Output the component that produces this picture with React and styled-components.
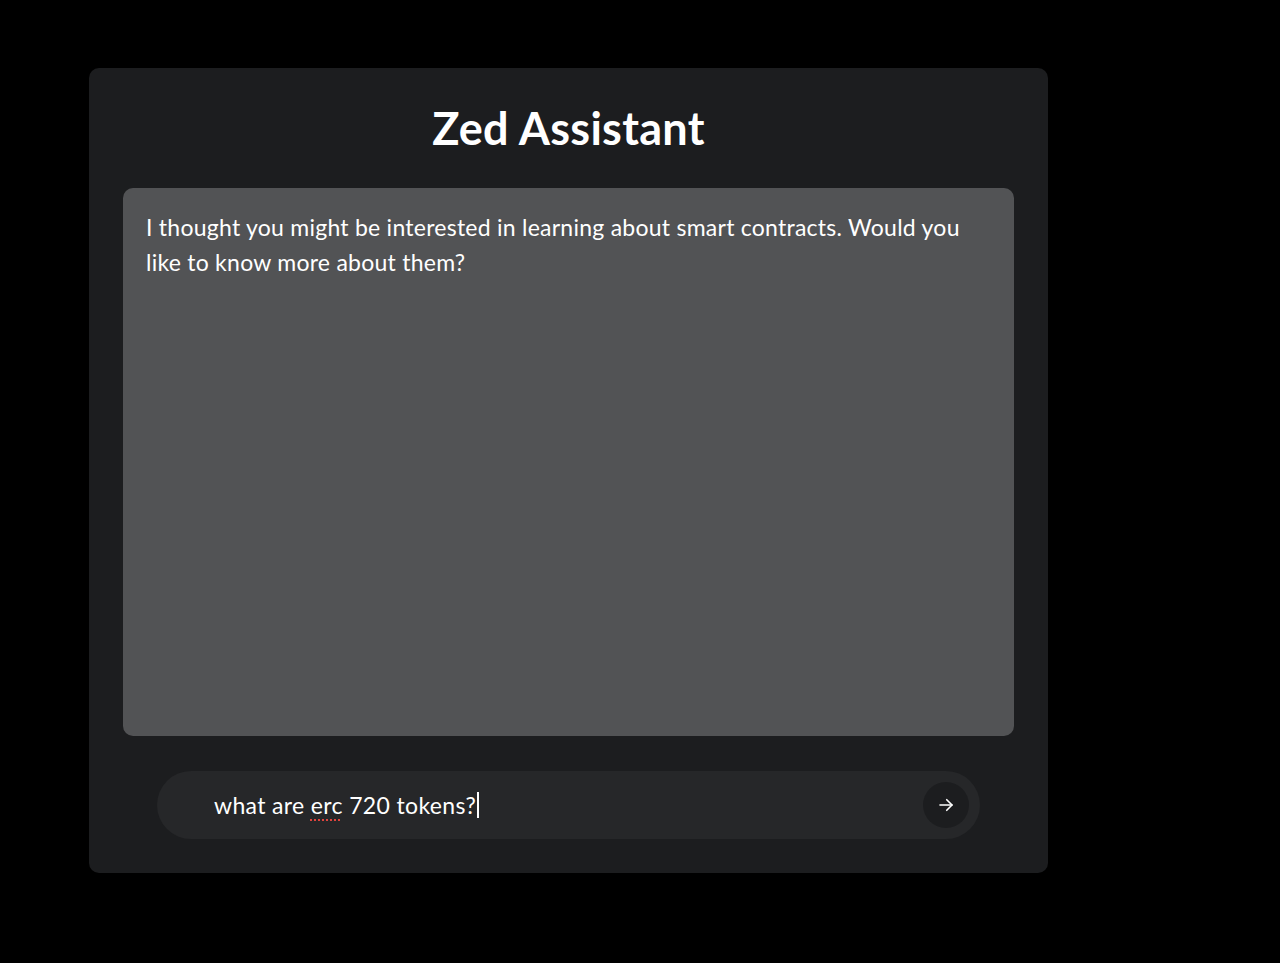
import React from 'react';
import styled, { createGlobalStyle } from 'styled-components';

/*                                   UI ELEMENTS                              */

const Global = createGlobalStyle`
  html, body {
    margin: 0;
    padding: 0;
    background: #000000;
  }
  body {
    font-family: "Lato", "Open Sans", sans-serif;
  }
`

// PAGE
const Page = styled.div`
  width: 1280px;
  height: 963px;
  padding: 68px 0 0 89px;
  box-sizing: border-box;
  background: #000000;
`

// PANEL
const Panel = styled.div`
  width: 959px;
  height: 805px;
  box-sizing: border-box;
  background: #1c1d1f;
  border-radius: 10px;
  padding: 0 34px 34px 34px;
  display: flex;
  flex-direction: column;
`

// TITLE
const Title = styled.h1`
  margin: 0;
  height: 120px;
  display: flex;
  align-items: center;
  justify-content: center;
  font-size: 45px;
  font-weight: 700;
  color: #ffffff;
  letter-spacing: 0.3px;
`

// CHAT LOG
const Log = styled.div`
  height: 548px;
  background: #525355;
  border-radius: 10px;
  padding: 22px 23px;
  box-sizing: border-box;
`

const Message = styled.p`
  margin: 0;
  font-size: 23px;
  line-height: 35px;
  color: #ffffff;
  letter-spacing: 0.25px;
`

// INPUT ROW
const InputBar = styled.div`
  margin: 35px 34px 0 34px;
  height: 68px;
  border-radius: 34px;
  background: #262729;
  display: flex;
  align-items: center;
  padding: 0 11px 0 57px;
`

const Field = styled.div`
  flex: 1;
  font-size: 23px;
  letter-spacing: 0.35px;
  color: #ffffff;
  display: flex;
  align-items: center;
`

const Misspelled = styled.span`
  text-decoration: underline dotted #e0443e;
  text-decoration-thickness: 2px;
  text-underline-offset: 5px;
`

const Caret = styled.span`
  display: inline-block;
  width: 1.5px;
  height: 26px;
  background: #ffffff;
  margin-left: 1px;
`

const Send = styled.button`
  width: 46px;
  height: 46px;
  border-radius: 50%;
  border: none;
  background: #1c1d1f;
  display: flex;
  align-items: center;
  justify-content: center;
  padding: 0;
  cursor: pointer;
`

/*                            END OF UI ELEMENTS                              */

export default function App() {
  return (
    <Page>
      <Global />
      <Panel>
        <Title>Zed Assistant</Title>
        <Log>
          <Message>
            I thought you might be interested in learning about smart contracts. Would you like to know more about them?
          </Message>
        </Log>
        <InputBar>
          <Field>
            what are&nbsp;<Misspelled>erc</Misspelled>&nbsp;720 tokens?<Caret />
          </Field>
          <Send>
            <svg width="18" height="18" viewBox="0 0 24 24" fill="none" stroke="#ffffff" strokeWidth="2.2" strokeLinecap="round" strokeLinejoin="round">
              <path d="M4 12h16" />
              <path d="M13 5l7 7-7 7" />
            </svg>
          </Send>
        </InputBar>
      </Panel>
    </Page>
  );
}
